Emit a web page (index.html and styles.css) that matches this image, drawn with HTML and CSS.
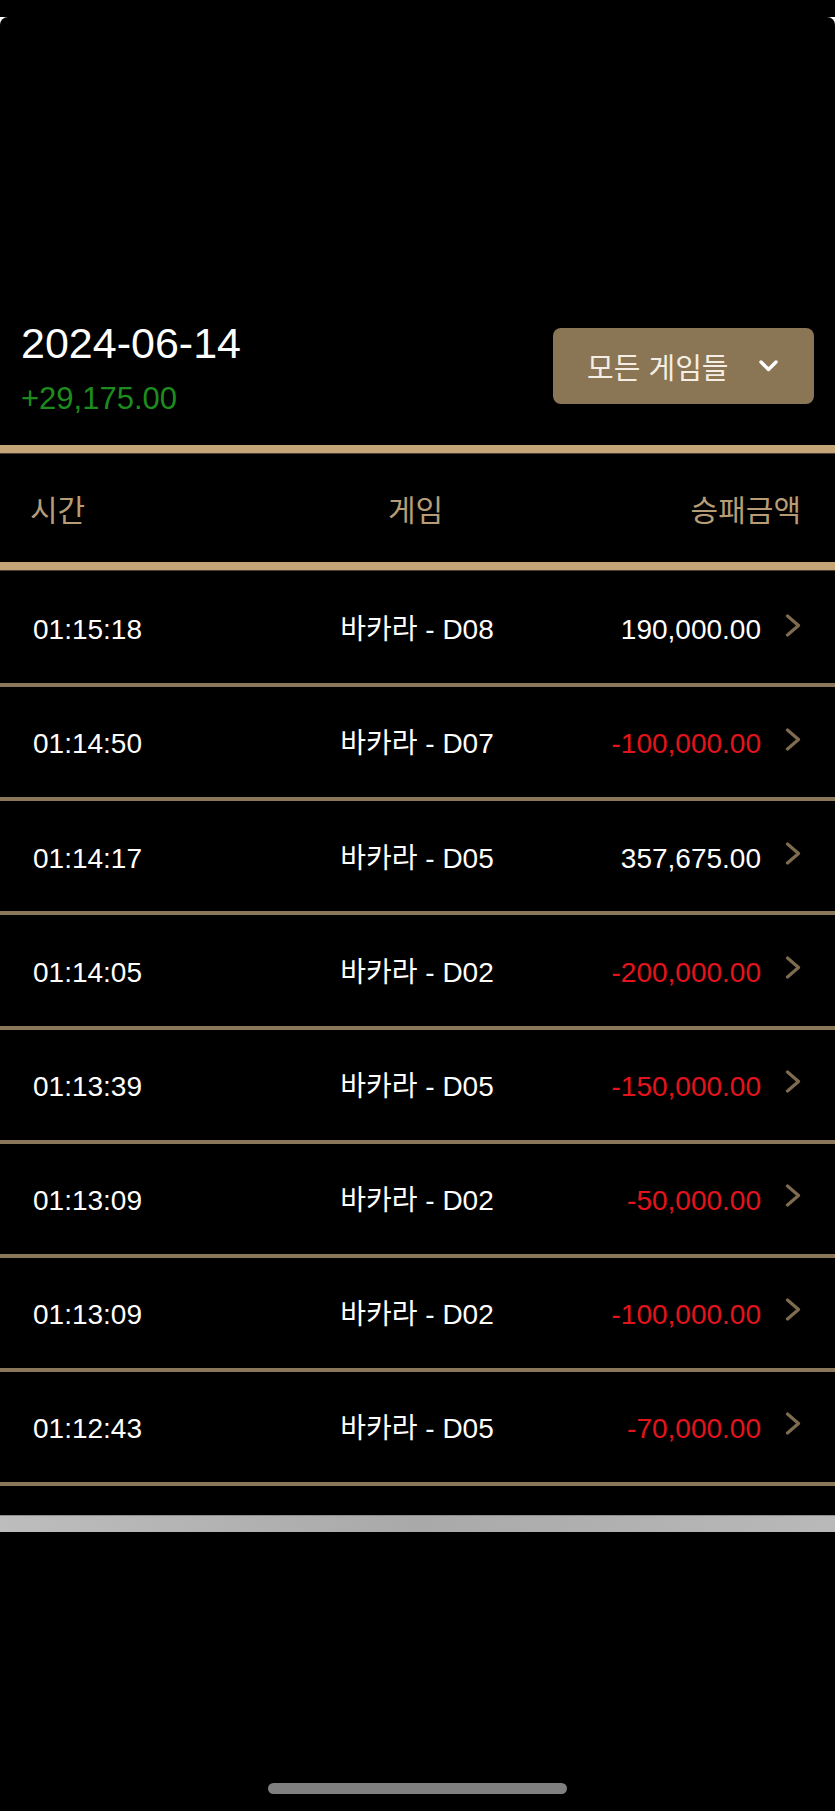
FILE: index.html
```html
<!DOCTYPE html>
<html lang="ko">
    <head>
        <meta charset="utf-8">
        <meta name="viewport" content="width=device-width, initial-scale=1">
        <title>베팅 내역</title>
        <link rel="stylesheet" href="styles.css">
    </head>

    <body>
        <div class="screen">
            <div class="sheet">
                <!-- 날짜 / 합계 -->
                <section class="summary">
                    <div class="summary-text">
                        <div class="summary-date">2024-06-14</div>
                        <div class="summary-total">+29,175.00</div>
                    </div>
                    <button class="game-select">
                        <span>모든 게임들</span>
                        <svg width="19" height="12" viewBox="0 0 19 12"><polyline points="2,2 9.5,9.5 17,2" fill="none" stroke="#fff" stroke-width="3.4" stroke-linecap="round" stroke-linejoin="round"/></svg>
                    </button>
                </section>

                <!-- 내역 테이블 -->
                <div class="history">
                    <div class="history-head">
                        <span>시간</span>
                        <span class="col-game">게임</span>
                        <span class="col-amount">승패금액</span>
                    </div>

                    <ul class="history-rows">
                        <li class="history-row">
                            <span>01:15:18</span>
                            <span class="col-game">바카라 - D08</span>
                            <span class="col-amount"><span>190,000.00</span><svg class="row-arrow" width="16" height="23" viewBox="0 0 16 23"><polyline points="2.5,2 13.5,11.5 2.5,21" fill="none" stroke="#7e6b50" stroke-width="3.2" stroke-linecap="round" stroke-linejoin="round"/></svg></span>
                        </li>
                        <li class="history-row">
                            <span>01:14:50</span>
                            <span class="col-game">바카라 - D07</span>
                            <span class="col-amount"><span class="loss">-100,000.00</span><svg class="row-arrow" width="16" height="23" viewBox="0 0 16 23"><polyline points="2.5,2 13.5,11.5 2.5,21" fill="none" stroke="#7e6b50" stroke-width="3.2" stroke-linecap="round" stroke-linejoin="round"/></svg></span>
                        </li>
                        <li class="history-row">
                            <span>01:14:17</span>
                            <span class="col-game">바카라 - D05</span>
                            <span class="col-amount"><span>357,675.00</span><svg class="row-arrow" width="16" height="23" viewBox="0 0 16 23"><polyline points="2.5,2 13.5,11.5 2.5,21" fill="none" stroke="#7e6b50" stroke-width="3.2" stroke-linecap="round" stroke-linejoin="round"/></svg></span>
                        </li>
                        <li class="history-row">
                            <span>01:14:05</span>
                            <span class="col-game">바카라 - D02</span>
                            <span class="col-amount"><span class="loss">-200,000.00</span><svg class="row-arrow" width="16" height="23" viewBox="0 0 16 23"><polyline points="2.5,2 13.5,11.5 2.5,21" fill="none" stroke="#7e6b50" stroke-width="3.2" stroke-linecap="round" stroke-linejoin="round"/></svg></span>
                        </li>
                        <li class="history-row">
                            <span>01:13:39</span>
                            <span class="col-game">바카라 - D05</span>
                            <span class="col-amount"><span class="loss">-150,000.00</span><svg class="row-arrow" width="16" height="23" viewBox="0 0 16 23"><polyline points="2.5,2 13.5,11.5 2.5,21" fill="none" stroke="#7e6b50" stroke-width="3.2" stroke-linecap="round" stroke-linejoin="round"/></svg></span>
                        </li>
                        <li class="history-row">
                            <span>01:13:09</span>
                            <span class="col-game">바카라 - D02</span>
                            <span class="col-amount"><span class="loss">-50,000.00</span><svg class="row-arrow" width="16" height="23" viewBox="0 0 16 23"><polyline points="2.5,2 13.5,11.5 2.5,21" fill="none" stroke="#7e6b50" stroke-width="3.2" stroke-linecap="round" stroke-linejoin="round"/></svg></span>
                        </li>
                        <li class="history-row">
                            <span>01:13:09</span>
                            <span class="col-game">바카라 - D02</span>
                            <span class="col-amount"><span class="loss">-100,000.00</span><svg class="row-arrow" width="16" height="23" viewBox="0 0 16 23"><polyline points="2.5,2 13.5,11.5 2.5,21" fill="none" stroke="#7e6b50" stroke-width="3.2" stroke-linecap="round" stroke-linejoin="round"/></svg></span>
                        </li>
                        <li class="history-row">
                            <span>01:12:43</span>
                            <span class="col-game">바카라 - D05</span>
                            <span class="col-amount"><span class="loss">-70,000.00</span><svg class="row-arrow" width="16" height="23" viewBox="0 0 16 23"><polyline points="2.5,2 13.5,11.5 2.5,21" fill="none" stroke="#7e6b50" stroke-width="3.2" stroke-linecap="round" stroke-linejoin="round"/></svg></span>
                        </li>
                    </ul>
                </div>

                <div class="scroll-track"></div>

                <div class="home-indicator"></div>
            </div>
        </div>
    </body>
</html>
```

FILE: styles.css
```css
/* 전체 */
html, body {
    margin: 0;
    padding: 0;
    background: #000;
}

body {
    font-family: "Liberation Sans", "Noto Sans CJK KR", Arial, sans-serif;
    color: #fff;
}

.screen {
    margin-top: 17px;
    height: 1794px;
    background: #fff;
}

.sheet {
    height: 100%;
    background: #000;
    border-radius: 8px 8px 0 0;
    display: flex;
    flex-direction: column;
}

/* 날짜 / 합계 */
.summary {
    display: flex;
    justify-content: space-between;
    align-items: flex-start;
    padding: 305px 21px 31px 21px;
}

.summary-text {
    display: flex;
    flex-direction: column;
    gap: 18px;
}

.summary-date {
    font-size: 43px;
    line-height: 43px;
}

.summary-total {
    font-size: 31px;
    line-height: 31px;
    color: #1d8c1d;
}

.game-select {
    margin-top: 6px;
    width: 261px;
    height: 76px;
    display: flex;
    align-items: center;
    gap: 30px;
    padding: 0 0 0 34px;
    background: #8a7555;
    color: #f4eee4;
    border: none;
    border-radius: 8px;
    font-family: "Noto Sans CJK KR", sans-serif;
    font-size: 29px;
    line-height: 1;
    cursor: pointer;
}

/* 내역 테이블 */
.history-head {
    height: 109px;
    display: grid;
    grid-template-columns: 1fr auto 1fr;
    align-items: center;
    padding: 0 34px 0 30px;
    border-top: 8px solid #c4a577;
    border-bottom: 8px solid #c4a577;
    box-shadow: 0 1px 0 #4a3e2e, inset 0 1px 0 #4a3e2e;
    color: #b79d76;
    font-family: "Noto Sans CJK KR", sans-serif;
    font-size: 30px;
    line-height: 1.2;
}

.col-game {
    text-align: center;
}

.col-amount {
    text-align: right;
}

.history-rows {
    list-style: none;
    margin: 0;
    padding: 3px 0 0 0;
}

.history-row {
    box-sizing: border-box;
    height: 114.14px;
    display: grid;
    grid-template-columns: 1fr auto 1fr;
    align-items: center;
    padding: 4px 34px 0 33px;
    border-bottom: 4px solid #8a7659;
    font-size: 28px;
    line-height: 1.2;
}

.history-row .col-amount {
    display: flex;
    justify-content: flex-end;
    align-items: center;
    gap: 24px;
}

.row-arrow {
    margin-top: -10px;
}

.loss {
    color: #e3141b;
}

/* 하단 */
.scroll-track {
    margin-top: 29px;
    height: 16px;
    border-top: 1px solid #8c8c8c;
    background: linear-gradient(to right, #bdbdbd, #a9a9a9 50%, #b9b9b9);
}

.home-indicator {
    margin: auto auto 17px auto;
    width: 299px;
    height: 11px;
    border-radius: 6px;
    background: #808080;
}
```
